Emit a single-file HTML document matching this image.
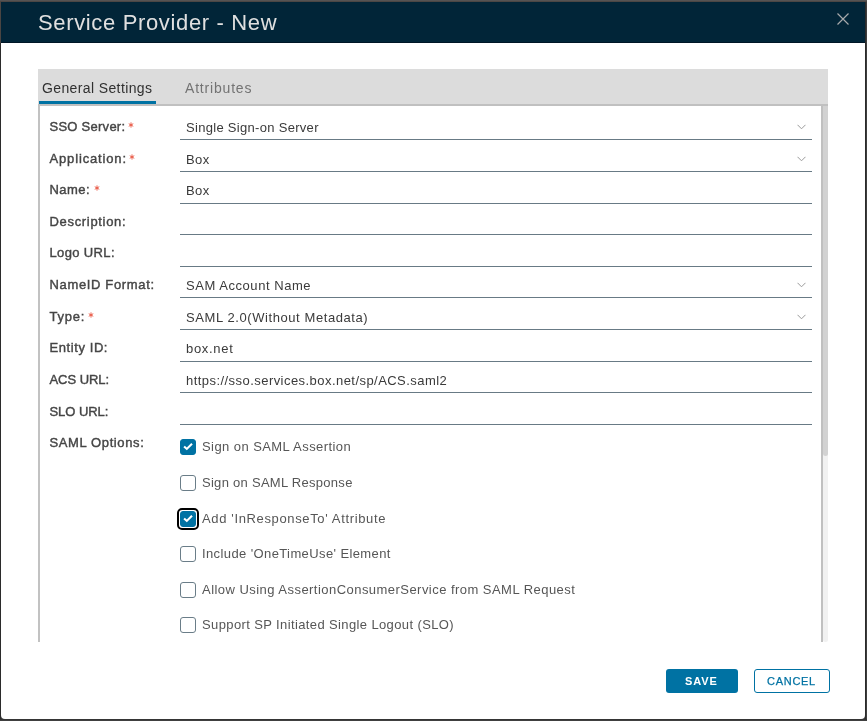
<!DOCTYPE html>
<html><head><meta charset="utf-8">
<style>
html,body{margin:0;padding:0;}
body{width:867px;height:721px;overflow:hidden;position:relative;background:#3a3a3a;font-family:"Liberation Sans",sans-serif;}
.m{will-change:transform;position:absolute;left:1px;top:2px;width:864px;height:717px;background:#fff;border-radius:0 0 4px 4px;overflow:hidden;}
.hd{position:absolute;left:0;top:0;width:864px;height:40px;background:#012538;border-bottom:1px solid #001626;}
.a{position:absolute;white-space:nowrap;line-height:20px;}
.title{left:37px;top:8px;font-size:22px;line-height:26px;letter-spacing:0.65px;color:#e0e0e0;}
.tabbar{position:absolute;left:37px;top:67px;width:790px;height:35px;background:#dcdcdc;border-bottom:2px solid #c0c0c0;}
.tabline{position:absolute;left:38px;top:99px;width:117px;height:3px;background:#0072a3;}
.tab{font-size:14px;}
.cbox{position:absolute;left:37px;top:104px;width:781px;height:536px;border-left:2px solid #c2c2c2;border-right:2px solid #c0c0c0;}
.sb{position:absolute;left:822px;top:104px;width:5px;height:536px;background:#f1f1f1;border-radius:0 0 3px 3px;}
.th{position:absolute;left:822px;top:104px;width:5px;height:350px;background:#d2d2d2;border-radius:0 0 3px 3px;}
.lb{font-size:13px;color:#454545;-webkit-text-stroke:0.4px #454545;}
.ast{position:absolute;}
.req{color:#e62700;font-weight:normal;font-size:12px;}
.ul{position:absolute;left:179px;width:632px;height:1px;background:#687a85;}
.iv{font-size:13px;color:#3a3a3a;letter-spacing:0.45px;}
.chev{position:absolute;left:796px;width:9px;height:6px;}
.cb{position:absolute;left:179px;width:14px;height:14px;border:1px solid #6a7d88;border-radius:3px;background:#fff;}
.cb.on{background:#0072a3;border-color:#0072a3;}
.ct{font-size:13px;color:#565656;letter-spacing:0.4px;}
.btn{position:absolute;top:667px;height:24px;border-radius:3px;box-sizing:border-box;}
</style></head><body>
<div style="position:absolute;left:0;top:0;width:867px;height:1px;background:#555353"></div>
<div style="position:absolute;left:0;top:1px;width:867px;height:1px;background:#4b4745"></div>
<div style="position:absolute;left:0;top:2px;width:1px;height:41px;background:#4a4542"></div>
<div style="position:absolute;left:0;top:43px;width:1px;height:676px;background:#2b2b2b"></div>
<div style="position:absolute;left:865px;top:2px;width:1px;height:717px;background:#2b2b2b"></div>
<div style="position:absolute;left:866px;top:2px;width:1px;height:717px;background:#3e3e3e"></div>
<div style="position:absolute;left:0;top:719px;width:867px;height:1px;background:#353535"></div>
<div style="position:absolute;left:0;top:720px;width:867px;height:1px;background:#404040"></div>
<div class="m">
  <div class="hd"></div>
  <div class="a title">Service Provider - New</div>
  <svg style="position:absolute;left:836px;top:11px" width="12" height="12" viewBox="0 0 12 12"><path d="M0.5 0.5L11.5 11.5M11.5 0.5L0.5 11.5" stroke="#a7a9ab" stroke-width="1.2" fill="none"/></svg>

  <div class="tabbar"></div>
  <div class="tabline"></div>
  <div class="a tab" style="left:41px;top:76px;color:#303030;letter-spacing:0.38px">General Settings</div>
  <div class="a tab" style="left:184px;top:76px;color:#737373;letter-spacing:0.81px">Attributes</div>

  <div class="cbox"></div>
  <div class="sb"></div>
  <div class="th"></div>

  <!-- rows -->
  <div class="a lb" style="left:48.5px;top:115px;letter-spacing:0.26px">SSO Server:</div>
  <div class="a iv" style="left:185px;top:116px;letter-spacing:0.3px">Single Sign-on Server</div>
  <svg class="chev" style="top:122px" viewBox="0 0 9 6"><path d="M0.5 0.8L4.5 4.8L8.5 0.8" stroke="#9a9a9a" stroke-width="1" fill="none"/></svg>
  <div class="ul" style="top:137px"></div>

  <div class="a lb" style="left:48.5px;top:147px;letter-spacing:0.85px">Application:</div>
  <div class="a iv" style="left:185px;top:148px;letter-spacing:0.4px">Box</div>
  <svg class="chev" style="top:154px" viewBox="0 0 9 6"><path d="M0.5 0.8L4.5 4.8L8.5 0.8" stroke="#9a9a9a" stroke-width="1" fill="none"/></svg>
  <div class="ul" style="top:169px"></div>

  <div class="a lb" style="left:48.5px;top:178px;letter-spacing:0.47px">Name:</div>
  <div class="a iv" style="left:185px;top:179px;letter-spacing:0.4px">Box</div>
  <div class="ul" style="top:201px"></div>

  <div class="a lb" style="left:48.5px;top:210px;letter-spacing:0.68px">Description:</div>
  <div class="ul" style="top:232px"></div>

  <div class="a lb" style="left:48.5px;top:241px;letter-spacing:0.36px">Logo URL:</div>
  <div class="ul" style="top:264px"></div>

  <div class="a lb" style="left:48.5px;top:273px;letter-spacing:0.65px">NameID Format:</div>
  <div class="a iv" style="left:185px;top:274px;letter-spacing:0.55px">SAM Account Name</div>
  <svg class="chev" style="top:280px" viewBox="0 0 9 6"><path d="M0.5 0.8L4.5 4.8L8.5 0.8" stroke="#9a9a9a" stroke-width="1" fill="none"/></svg>
  <div class="ul" style="top:295px"></div>

  <div class="a lb" style="left:48.5px;top:305px;letter-spacing:0.75px">Type:</div>
  <div class="a iv" style="left:185px;top:306px;letter-spacing:0.58px">SAML 2.0(Without Metadata)</div>
  <svg class="chev" style="top:312px" viewBox="0 0 9 6"><path d="M0.5 0.8L4.5 4.8L8.5 0.8" stroke="#9a9a9a" stroke-width="1" fill="none"/></svg>
  <div class="ul" style="top:327px"></div>

  <div class="a lb" style="left:48.5px;top:336px;letter-spacing:0.58px">Entity ID:</div>
  <div class="a iv" style="left:185px;top:337px;letter-spacing:0.7px">box.net</div>
  <div class="ul" style="top:359px"></div>

  <div class="a lb" style="left:48.5px;top:368px;letter-spacing:-0.05px">ACS URL:</div>
  <div class="a iv" style="left:185px;top:369px;letter-spacing:0.45px">https://sso.services.box.net/sp/ACS.saml2</div>
  <div class="ul" style="top:390px"></div>

  <div class="a lb" style="left:48.5px;top:400px;letter-spacing:-0.05px">SLO URL:</div>
  <div class="ul" style="top:422px"></div>

  <div class="a lb" style="left:48.5px;top:431px;letter-spacing:0.61px">SAML Options:</div>

  <div class="cb on" style="top:437px"><svg width="14" height="14" viewBox="0 0 14 14" style="position:absolute;left:0;top:0"><path d="M3.1 6.4L5.8 8.9L11 3.8" stroke="#fff" stroke-width="2.1" fill="none"/></svg></div>
  <div class="a ct" style="left:201px;top:435px;letter-spacing:0.43px">Sign on SAML Assertion</div>
  <div class="cb" style="top:473px"></div>
  <div class="a ct" style="left:201px;top:471px;letter-spacing:0.28px">Sign on SAML Response</div>
  <div style="position:absolute;left:176px;top:506px;width:18px;height:18px;border:2px solid #000;border-radius:5px"></div>
  <div class="cb on" style="top:509px"><svg width="14" height="14" viewBox="0 0 14 14" style="position:absolute;left:0;top:0"><path d="M3.1 6.4L5.8 8.9L11 3.8" stroke="#fff" stroke-width="2.1" fill="none"/></svg></div>
  <div class="a ct" style="left:201px;top:507px;letter-spacing:0.64px">Add 'InResponseTo' Attribute</div>
  <div class="cb" style="top:544px"></div>
  <div class="a ct" style="left:201px;top:542px;letter-spacing:0.39px">Include 'OneTimeUse' Element</div>
  <div class="cb" style="top:580px"></div>
  <div class="a ct" style="left:201px;top:578px;letter-spacing:0.46px">Allow Using AssertionConsumerService from SAML Request</div>
  <div class="cb" style="top:615px"></div>
  <div class="a ct" style="left:201px;top:613px;letter-spacing:0.38px">Support SP Initiated Single Logout (SLO)</div>

  <svg class="ast" style="left:126.75px;top:119.5px" width="6" height="6" viewBox="-3 -3 6 6"><path d="M0 -2.6V2.6M-2.25 -1.3L2.25 1.3M-2.25 1.3L2.25 -1.3" stroke="#e8503c" stroke-width="0.9" fill="none"/></svg>
  <svg class="ast" style="left:127.9px;top:151.5px" width="6" height="6" viewBox="-3 -3 6 6"><path d="M0 -2.6V2.6M-2.25 -1.3L2.25 1.3M-2.25 1.3L2.25 -1.3" stroke="#e8503c" stroke-width="0.9" fill="none"/></svg>
  <svg class="ast" style="left:92.5px;top:182.5px" width="6" height="6" viewBox="-3 -3 6 6"><path d="M0 -2.6V2.6M-2.25 -1.3L2.25 1.3M-2.25 1.3L2.25 -1.3" stroke="#e8503c" stroke-width="0.9" fill="none"/></svg>
  <svg class="ast" style="left:87.4px;top:309.5px" width="6" height="6" viewBox="-3 -3 6 6"><path d="M0 -2.6V2.6M-2.25 -1.3L2.25 1.3M-2.25 1.3L2.25 -1.3" stroke="#e8503c" stroke-width="0.9" fill="none"/></svg>
  <div class="btn" style="left:665px;width:72px;background:#0072a3"></div>
  <div class="a" style="left:684px;top:672px;font-size:11px;font-weight:bold;color:#fff;letter-spacing:0.93px;line-height:14px">SAVE</div>
  <div class="btn" style="left:753px;width:76px;border:1px solid #0072a3;background:#fff"></div>
  <div class="a" style="left:766px;top:672px;font-size:11px;color:#0072a3;letter-spacing:0.72px;line-height:14px;-webkit-text-stroke:0.25px #0072a3">CANCEL</div>
</div>
</body></html>
